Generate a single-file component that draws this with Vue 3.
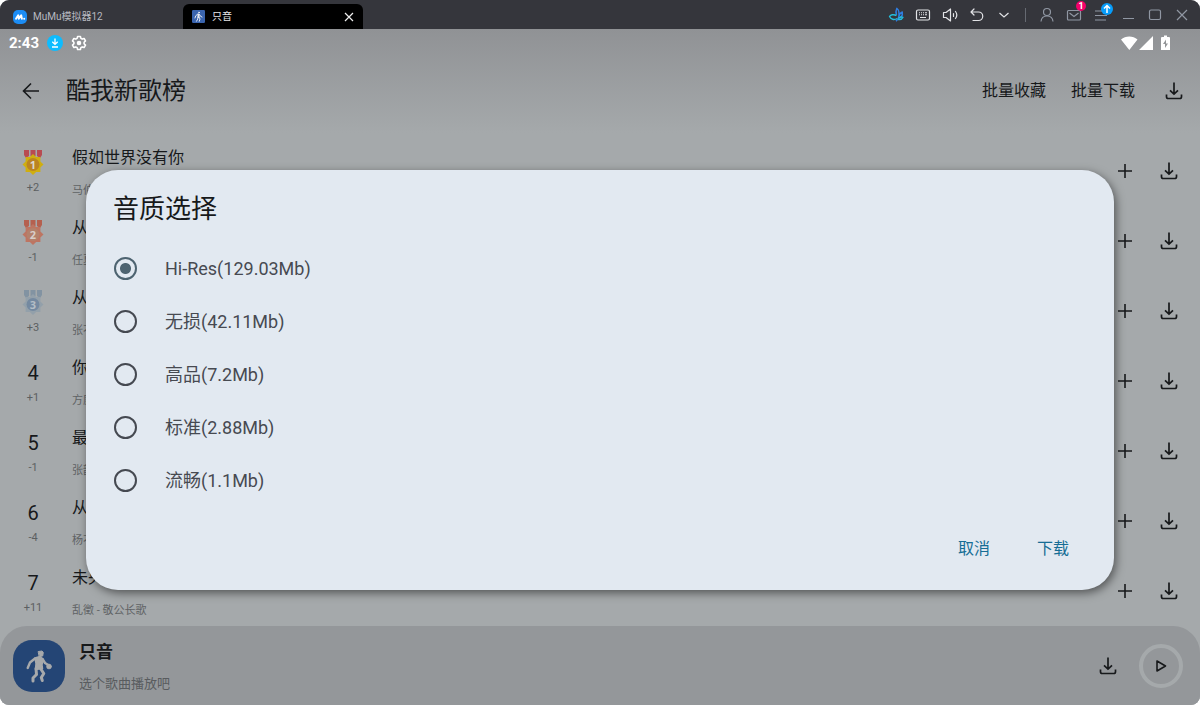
<script setup>
import { ref } from 'vue'

const quality = ref('Hi-Res')
const qualities = [
  { id: 'Hi-Res', label: 'Hi-Res(129.03Mb)' },
  { id: 'lossless', label: '无损(42.11Mb)' },
  { id: 'high', label: '高品(7.2Mb)' },
  { id: 'standard', label: '标准(2.88Mb)' },
  { id: 'smooth', label: '流畅(1.1Mb)' },
]

const songs = [
  { rank: 1, diff: '+2', title: '假如世界没有你', artist: '马伯' },
  { rank: 2, diff: '-1', title: '从', artist: '任夏' },
  { rank: 3, diff: '+3', title: '从', artist: '张不' },
  { rank: 4, diff: '+1', title: '你', artist: '方庭' },
  { rank: 5, diff: '-1', title: '最', artist: '张韶' },
  { rank: 6, diff: '-4', title: '从', artist: '杨不' },
  { rank: 7, diff: '+11', title: '未央', artist: '乱徵 - 敬公长歌' },
]

const medals = {
  1: { ribbon: '#b84b52', star: '#cfae10', disc: '#bb8420', text: '#dcdad0' },
  2: { ribbon: '#b5604f', star: '#bd7562', disc: '#b3816c', text: '#d8cfca' },
  3: { ribbon: '#8293a2', star: '#93a0aa', disc: '#7489a0', text: '#b4bec6' },
}
</script>

<template>
  <div class="window">
    <header class="titlebar">
      <div class="host">
        <svg width="14" height="14" viewBox="0 0 14 14" aria-hidden="true">
          <rect width="14" height="14" rx="5" fill="#1c8df5" />
          <path d="M3 8.800 5.200 5.200 5.800 8.800 8.200 5.200 8.900 8.800" fill="none" stroke="#fff" stroke-width="1.900" stroke-linecap="round" stroke-linejoin="round" />
          <circle cx="11.200" cy="8.800" r="1" fill="#fff" />
        </svg>
        <span>MuMu模拟器12</span>
      </div>
      <div class="tab">
        <svg width="13" height="13" viewBox="0 0 52 52" aria-hidden="true">
          <rect width="52" height="52" rx="5" fill="#3a64ae" />
          <g fill="none" stroke="#e6eaf2" stroke-linecap="round" stroke-linejoin="round">
            <circle cx="28" cy="10" r="2" stroke-width="4" />
            <path d="M26 18v10" stroke-width="8" />
            <path d="M22 17 15 23 12 32M30 18l4 7 6 3M24 28l-1 8-5 9M28 28l4 8-3 9" stroke-width="4" />
          </g>
        </svg>
        <span>只音</span>
        <button class="tab-close" aria-label="关闭标签">
          <svg width="10" height="10" viewBox="0 0 10 10"><path d="M1 1l8 8M9 1l-8 8" stroke="#eee" stroke-width="1.200" /></svg>
        </button>
      </div>
      <nav class="tools">
        <button aria-label="助手">
          <svg width="16" height="16" viewBox="0 0 16 16" fill="none" stroke-width="1.400" stroke-linejoin="round">
            <path d="M8.500 8C7.500 5 8 3 8.800 1.300 11 3 11.500 7 10.300 11.500L8 14.300M10.800 9.500C11.500 7 12.800 5.500 14.300 5c.5 3-.8 5.500-4 6.500" stroke="#2f7de0" />
            <path d="M8.500 8.500C5.500 7 2.500 7.800 1.500 9.500c1.500 3 4.500 3.800 7.800 2M10.300 11.300c1.700-1.300 3.500-1.600 4.700-1-.8 1.700-2.500 2.700-5 2.200" stroke="#23bfdc" />
          </svg>
        </button>
        <button aria-label="键盘">
          <svg width="16" height="16" viewBox="0 0 16 16" fill="none" stroke="#e2e3e6">
            <rect x="1.500" y="3" width="13" height="10" rx="1.500" stroke-width="1.200" />
            <path d="M4 5.800h1m1 0h1m1 0h1m1 0h2M4 7.800h1m1 0h1m1 0h1m1 0h2M5 10.500h6" stroke-width="1.100" />
          </svg>
        </button>
        <button aria-label="音量">
          <svg width="16" height="16" viewBox="0 0 16 16" fill="none" stroke="#e2e3e6" stroke-width="1.200" stroke-linejoin="round" stroke-linecap="round">
            <path d="M1.500 5.500H4L8.500 2v12L4 10.500H1.500ZM11.500 6.500v3M13.500 4.500c1.500 2 1.500 5 0 7" />
          </svg>
        </button>
        <button aria-label="返回">
          <svg width="16" height="16" viewBox="0 0 16 16" fill="none" stroke="#e2e3e6" stroke-width="1.200" stroke-linejoin="round" stroke-linecap="round">
            <path d="M5 2 2 5l3 3M2 5h7.500a4 4 0 0 1 0 8.500H4" />
          </svg>
        </button>
        <button aria-label="更多">
          <svg width="16" height="16" viewBox="0 0 16 16" fill="none" stroke="#e2e3e6" stroke-width="1.200"><path d="M3.500 6 8 10l4.500-4" /></svg>
        </button>
        <i class="divider"></i>
        <button aria-label="账号">
          <svg width="16" height="16" viewBox="0 0 16 16" fill="none" stroke="#9097a3" stroke-width="1.200">
            <circle cx="8" cy="5" r="3.500" /><path d="M2 14.500c.3-3.500 2.500-5.500 6-5.500s5.700 2 6 5.500" />
          </svg>
        </button>
        <button aria-label="消息">
          <svg width="16" height="16" viewBox="0 0 16 16" fill="none" stroke="#9097a3" stroke-width="1.200">
            <rect x="1.500" y="3.500" width="13" height="9.500" rx="1" /><path d="m3.500 6 4.500 3.500L12.500 6" />
          </svg>
          <span class="badge">1</span>
        </button>
        <button aria-label="菜单">
          <svg width="16" height="16" viewBox="0 0 16 16" stroke="#9097a3" stroke-width="1.200"><path d="M2 4h9M2 8.500h12M2 13h11" /></svg>
          <span class="badge update">
            <svg width="12" height="12" viewBox="0 0 12 12" fill="none" stroke="#fff" stroke-width="1.500"><path d="M6 10V2.500M3 5.500l3-3 3 3" /></svg>
          </span>
        </button>
        <button aria-label="最小化">
          <svg width="16" height="16" viewBox="0 0 16 16" stroke="#9097a3" stroke-width="1.200"><path d="M3 11.500h11" /></svg>
        </button>
        <button aria-label="最大化">
          <svg width="16" height="16" viewBox="0 0 16 16" fill="none" stroke="#9097a3" stroke-width="1.200"><rect x="2.500" y="3" width="11" height="9.500" rx="1.500" /></svg>
        </button>
        <button aria-label="关闭">
          <svg width="16" height="16" viewBox="0 0 16 16" stroke="#9097a3" stroke-width="1.200"><path d="m3 3 10 10M13 3 3 13" /></svg>
        </button>
      </nav>
    </header>

    <main class="screen">
      <div class="status">
        <span class="clock">2:43</span>
        <svg width="16" height="16" viewBox="0 0 16 16" aria-hidden="true">
          <circle cx="8" cy="8" r="8" fill="#0dbcff" />
          <path d="M8 3.500V9M5.300 6.700 8 9.400l2.700-2.700M5 12h6" fill="none" stroke="#fff" stroke-width="1.300" />
        </svg>
        <svg width="16" height="16" viewBox="0 0 16 16" fill="none" stroke="#fff" stroke-width="1.600" stroke-linejoin="round" aria-hidden="true">
          <path d="M6.600 1.500h2.800l.5 1.900 1.300.7 1.900-.6 1.400 2.400L13.100 7.300v1.400l1.400 1.400-1.400 2.400-1.900-.6-1.300.7-.5 1.900H6.600l-.5-1.900-1.300-.7-1.900.6-1.400-2.400 1.400-1.400V7.300L1.500 5.900l1.400-2.400 1.900.6 1.300-.7Z" />
          <circle cx="8" cy="8" r="1.500" fill="#fff" />
        </svg>
        <svg class="signals" width="50" height="16" viewBox="0 0 50 16" fill="#fff" aria-hidden="true">
          <path d="M1 4.500C5.500.5 13 .5 17.500 4.500L9.300 15ZM33 1v14H19Z" />
          <path fill-rule="evenodd" d="M42 2h2V.500h3V2h2Q50 2 50 3v11.500q0 .5-.5.500h-8q-.5 0-.5-.5V3q0-1 1-1ZM46 4.500 43 9h2v4l3-4.500h-2Z" />
        </svg>
      </div>

      <div class="appbar">
        <button class="back" aria-label="返回上一页">
          <svg width="18" height="18" viewBox="0 0 18 18" fill="none" stroke="#17191b" stroke-width="1.600"><path d="M17 9H1.500M9 1.500 1.500 9 9 16.500" /></svg>
        </button>
        <h1>酷我新歌榜</h1>
        <button class="text-action">批量收藏</button>
        <button class="text-action">批量下载</button>
        <button class="icon" aria-label="下载全部">
          <svg width="18" height="18" viewBox="0 0 18 18"><path class="dl" d="M9 .500V12M5 8.300 9 12l4-3.700M1.500 12.500v2.300q0 1.700 1.700 1.700h11.600q1.700 0 1.700-1.700v-2.300" /></svg>
        </button>
      </div>

      <ul class="songs">
        <li v-for="song in songs" :key="song.rank">
          <div class="rank">
            <svg v-if="medals[song.rank]" width="22" height="26" viewBox="0 0 22 26" role="img" :aria-label="'第' + song.rank + '名'">
              <path d="M2 0h5v6l-3 2-2-3ZM8.500 0h5v6h-5ZM15 0h5v5l-2 3-3-2Z" :fill="medals[song.rank].ribbon" />
              <path d="m21.500 14.500-3.100 3.100v4.300h-4.300L11 25l-3.100-3.100H3.600v-4.300L.5 14.500l3.100-3.100V7.100h4.300L11 4l3.100 3.100h4.300v4.300Z" :fill="medals[song.rank].star" />
              <circle cx="11" cy="14.500" r="6.500" :fill="medals[song.rank].disc" />
              <text x="11" y="18.500" text-anchor="middle" font-family="Open Sans, sans-serif" font-weight="700" font-size="11" :fill="medals[song.rank].text">{{ song.rank }}</text>
            </svg>
            <span v-else class="place">{{ song.rank }}</span>
            <span class="diff">{{ song.diff }}</span>
          </div>
          <div class="info">
            <span class="title">{{ song.title }}</span>
            <span class="artist">{{ song.artist }}</span>
          </div>
          <button class="icon" aria-label="添加">
            <svg width="14" height="14" viewBox="0 0 14 14"><path d="M7 0v14M0 7h14" stroke="#17191b" stroke-width="1.600" /></svg>
          </button>
          <button class="icon" aria-label="下载">
            <svg width="18" height="18" viewBox="0 0 18 18"><path class="dl" d="M9 .500V12M5 8.300 9 12l4-3.700M1.500 12.500v2.300q0 1.700 1.700 1.700h11.600q1.700 0 1.700-1.700v-2.300" /></svg>
          </button>
        </li>
      </ul>

      <footer class="player">
        <svg width="52" height="52" viewBox="0 0 52 52" aria-hidden="true">
          <rect width="52" height="52" rx="19" fill="#244575" />
          <g fill="#a7a9ab" stroke="#a7a9ab" stroke-linecap="round" stroke-linejoin="round">
            <path d="M25.500 11.500 29 11l1.300 1.500-.6 3.500-3.200.5Z" stroke-width="1" />
            <path d="m22 18 5-1.500 3 2.500-1 6 .5 3.500-7 1 .5-6Z" stroke-width="1.500" />
            <path d="m22 18.500-5 4-2.300 5.500M29.500 19l2.500 4 4 2.500" fill="none" stroke-width="2.400" />
            <circle cx="36" cy="26.500" r="2.500" stroke-width=".5" />
            <path d="m23 28.500.5 6-3.500 3.500v3" fill="none" stroke-width="3" />
            <path d="m27.500 28.500 3.300 5-2.500 4 1 3" fill="none" stroke-width="3" />
          </g>
        </svg>
        <div class="now">
          <strong>只音</strong>
          <span>选个歌曲播放吧</span>
        </div>
        <button class="icon" aria-label="下载当前歌曲">
          <svg width="18" height="18" viewBox="0 0 18 18"><path class="dl" d="M9 .500V12M5 8.300 9 12l4-3.700M1.500 12.500v2.300q0 1.700 1.700 1.700h11.600q1.700 0 1.700-1.700v-2.300" /></svg>
        </button>
        <button class="play" aria-label="播放">
          <svg width="12" height="12" viewBox="0 0 12 12" fill="none" stroke="#17191b" stroke-width="1.600" stroke-linejoin="round"><path d="M2 1v10l8.500-5Z" /></svg>
        </button>
      </footer>

      <div class="scrim">
        <form class="dialog" role="dialog" aria-labelledby="dialog-title" @submit.prevent>
          <h2 id="dialog-title">音质选择</h2>
          <label v-for="q in qualities" :key="q.id">
            <input v-model="quality" type="radio" name="quality" :value="q.id" />
            <span>{{ q.label }}</span>
          </label>
          <div class="actions">
            <button type="button">取消</button>
            <button type="submit">下载</button>
          </div>
        </form>
      </div>
    </main>
  </div>
</template>

<style>
body { margin: 0; background: #fff; }
</style>

<style scoped>
* { box-sizing: border-box; }
.window {
  min-height: 100vh; display: flex; flex-direction: column; overflow: hidden;
  border-radius: 9px; background: #a5a9ab; color: #17191b;
  font-family: Roboto, "Noto Sans CJK SC", sans-serif;
}
button { border: 0; padding: 0; background: none; color: inherit; font: inherit; display: grid; place-items: center; }
svg { display: block; flex: none; }

.titlebar { height: 29px; display: flex; align-items: center; background: #35363c; color: #b8bac0; font-size: 10px; line-height: 16px; }
.host { width: 183px; display: flex; gap: 6px; padding: 4px 0 0 13px; align-items: center; }
.tab { width: 180px; height: 25px; align-self: flex-end; display: flex; align-items: center; gap: 7px; padding: 0 9px; border-radius: 6px 6px 0 0; background: #000; color: #e8e8e8; }
.tab-close { margin-left: auto; }
.tools { margin-left: auto; display: flex; align-items: center; gap: 11px; padding-right: 10px; }
.tools button { position: relative; width: 16px; height: 16px; }
.divider { width: 1px; height: 14px; margin: 0 2px; background: #666a72; }
.badge { position: absolute; right: -4px; top: -6px; width: 10px; height: 10px; border-radius: 50%; background: #f5006a; color: #fff; font-size: 9px; line-height: 10px; font-weight: 700; }
.badge.update { top: -4px; width: 12px; height: 12px; background: #069dfb; }

.screen { flex: 1; position: relative; display: flex; flex-direction: column; background: linear-gradient(#909295, #a5a9ab 104px); }
.status { height: 26px; display: flex; align-items: center; gap: 8px; padding: 1px 30px 0 9px; color: #fff; }
.clock { font-size: 15px; line-height: 20px; font-weight: 700; }
.signals { margin-left: auto; }
.appbar { height: 70px; display: flex; align-items: center; padding: 2px 17px 0 22px; }
.appbar h1 { margin: 0 auto 0 26px; font-size: 24px; line-height: 32px; font-weight: 400; }
.text-action { font-size: 16px; line-height: 24px; margin-right: 25px; }
.icon { width: 18px; height: 24px; }
.appbar .icon { margin-left: 5px; }
.dl { fill: none; stroke: #17191b; stroke-width: 1.7; }

.songs { list-style: none; margin: 0; padding: 11px 0 0; flex: 1; }
.songs li { height: 70px; display: flex; align-items: center; gap: 26px; padding-right: 22px; }
.rank { width: 66px; height: 100%; display: flex; flex-direction: column; align-items: center; padding-top: 14px; }
.rank svg { margin-bottom: 4px; }
.place { height: 30px; font-size: 20px; line-height: 26px; }
.diff { font-size: 11px; line-height: 16px; color: #5c5f61; }
.songs .info { flex: 1; display: flex; flex-direction: column; gap: 12px; margin-left: -20px; padding-top: 3px; }
.title { font-size: 16px; line-height: 24px; }
.artist { font-size: 11px; line-height: 18px; color: #606365; }

.player { height: 79px; display: flex; align-items: center; gap: 14px; padding: 0 17px 0 13px; border-radius: 27px 27px 0 0; background: #94979a; }
.now { flex: 1; display: flex; flex-direction: column; gap: 10px; padding-top: 2px; }
.now strong { font-size: 17px; line-height: 24px; font-weight: 700; }
.now span { font-size: 13px; line-height: 20px; color: #595c5f; }
.play { width: 44px; height: 44px; margin-left: 8px; border: 4px solid #a5a9ab; border-radius: 50%; }

.scrim { position: absolute; inset: 26px 0 0; display: grid; align-items: center; padding: 0 86px; }
.dialog { padding: 23px 27px 29px; border-radius: 32px; background: #e2e9f1; box-shadow: 2px 3px 10px rgba(0, 0, 0, .5); display: flex; flex-direction: column; }
.dialog h2 { margin: 0 0 17px; font-size: 26px; line-height: 32px; font-weight: 400; }
.dialog label { height: 53px; display: flex; align-items: center; gap: 28px; color: #474a51; font-size: 18px; line-height: 28px; }
.dialog input { appearance: none; flex: none; width: 23px; height: 23px; margin: 0 0 0 1px; border: 2px solid #454951; border-radius: 50%; }
.dialog input:checked { border-color: #4d6370; background: radial-gradient(circle, #4d6370 5px, transparent 6px); }
.actions { display: flex; justify-content: flex-end; gap: 47px; padding: 30px 18px 0 0; color: #166d95; font-size: 16px; line-height: 24px; }
</style>
